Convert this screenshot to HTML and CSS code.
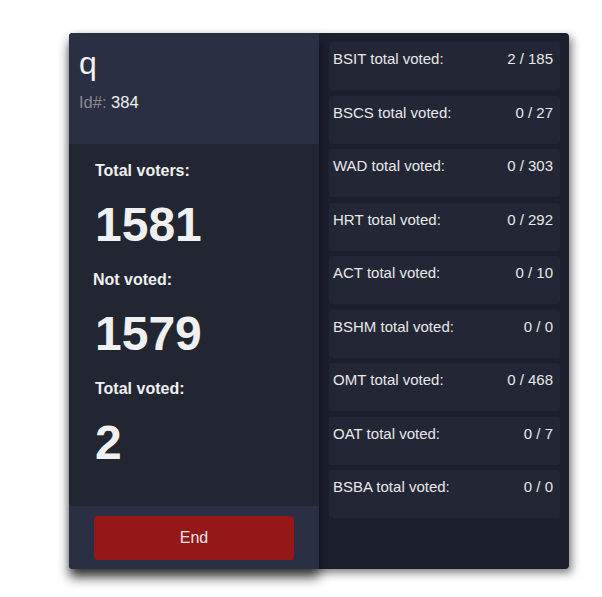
FILE: index.html
```html
<!DOCTYPE html>
<html>
<head>
<meta charset="utf-8">
<link rel="stylesheet" href="styles.css">
</head>
<body>
<div class="board">
  <div class="summary">
    <div class="head">
      <div class="name">q</div>
      <div class="idline"><span class="idlabel">Id#:</span> 384</div>
    </div>
    <div class="stats">
      <div class="label">Total voters:</div>
      <div class="num">1581</div>
      <div class="label shift">Not voted:</div>
      <div class="num">1579</div>
      <div class="label">Total voted:</div>
      <div class="num">2</div>
    </div>
    <div class="foot">
      <button class="end">End</button>
    </div>
  </div>
  <div class="courses">
    <div class="card"><span>BSIT total voted:</span><span>2 / 185</span></div>
    <div class="card"><span>BSCS total voted:</span><span>0 / 27</span></div>
    <div class="card"><span>WAD total voted:</span><span>0 / 303</span></div>
    <div class="card"><span>HRT total voted:</span><span>0 / 292</span></div>
    <div class="card"><span>ACT total voted:</span><span>0 / 10</span></div>
    <div class="card"><span>BSHM total voted:</span><span>0 / 0</span></div>
    <div class="card"><span>OMT total voted:</span><span>0 / 468</span></div>
    <div class="card"><span>OAT total voted:</span><span>0 / 7</span></div>
    <div class="card"><span>BSBA total voted:</span><span>0 / 0</span></div>
  </div>
</div>
</body>
</html>
```

FILE: styles.css
```css
html, body {
  margin: 0;
  padding: 0;
  background: #ffffff;
  font-family: "Liberation Sans", Arial, sans-serif;
}
body {
  min-height: 597px;
  padding-top: 33px;
  box-sizing: border-box;
}
.board {
  margin: 0 0 0 69px;
  width: 500px;
  height: 536px;
  display: flex;
  border-radius: 4px;
  background: #1c1f2e;
  box-shadow: 3px 4px 9px rgba(0, 0, 0, 0.5);
}
.summary {
  width: 250px;
  display: flex;
  flex-direction: column;
  border-radius: 4px 0 0 4px;
  background: #222532;
  box-shadow: 0 9px 12px rgba(0, 0, 0, 0.6);
  position: relative;
  z-index: 1;
}
.head {
  height: 111px;
  box-sizing: border-box;
  padding: 12px 10px 0 10px;
  background: #2a2f43;
  border-radius: 4px 0 0 0;
  color: #f2f2f2;
}
.name {
  font-size: 32px;
  line-height: 36px;
}
.idline {
  margin-top: 11px;
  font-size: 16.5px;
  line-height: 20px;
}
.idlabel {
  color: #8a8a8a;
}
.stats {
  flex: 1;
  padding: 16px 20px 0 26px;
  color: #f0f0f0;
}
.label {
  font-size: 16px;
  font-weight: bold;
  line-height: 21px;
}
.shift {
  margin-left: -2px;
}
.num {
  font-size: 48px;
  font-weight: bold;
  line-height: 88px;
}
.foot {
  height: 63px;
  box-sizing: border-box;
  padding: 10px 25px 0 25px;
  background: #2a2f43;
  border-radius: 0 0 0 4px;
}
.end {
  display: block;
  width: 200px;
  height: 44px;
  border: none;
  border-radius: 4px;
  background: #961717;
  color: #f0e6e6;
  font-family: "Liberation Sans", Arial, sans-serif;
  font-size: 16px;
  padding: 0;
}
.courses {
  flex: 1;
  padding: 9px 9px 0 10px;
  display: flex;
  flex-direction: column;
  gap: 5.5px;
}
.card {
  height: 48px;
  box-sizing: border-box;
  padding: 8px 7px 0 4px;
  display: flex;
  justify-content: space-between;
  background: #232634;
  border-radius: 3px;
  color: #e8e8e8;
  font-size: 15px;
  line-height: 17px;
}
```
